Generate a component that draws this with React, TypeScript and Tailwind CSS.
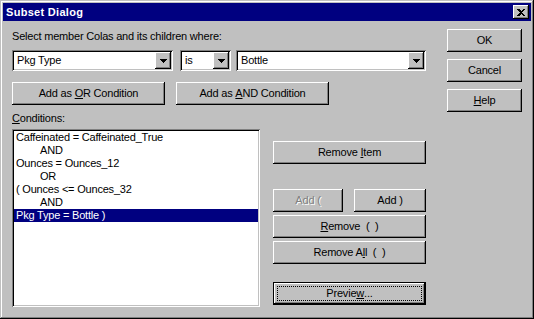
import React, { FC, ReactNode } from "react"

// Win95 bevels, drawn as stacked inset shadows
const raised =
  "shadow-[inset_-1px_-1px_0_#000,inset_1px_1px_0_#fff,inset_-2px_-2px_0_#808080,inset_2px_2px_0_#c0c0c0]"
const sunken =
  "shadow-[inset_1px_1px_0_#808080,inset_-1px_-1px_0_#fff,inset_2px_2px_0_#000,inset_-2px_-2px_0_#c0c0c0]"

type ButtonProps = { children: ReactNode; className?: string; disabled?: boolean }

const Button: FC<ButtonProps> = ({ children, className = "", disabled }) => (
  <div
    className={`flex h-[23px] items-center justify-center bg-[#c0c0c0] ${raised} ${
      disabled ? "text-[#808080] [text-shadow:1px_1px_0_#fff]" : "text-black"
    } ${className}`}
  >
    {children}
  </div>
)

const Arrow = () => (
  <svg width="7" height="4" viewBox="0 0 7 4" shapeRendering="crispEdges">
    <rect x="0" y="0" width="7" height="1" fill="#000" />
    <rect x="1" y="1" width="5" height="1" fill="#000" />
    <rect x="2" y="2" width="3" height="1" fill="#000" />
    <rect x="3" y="3" width="1" height="1" fill="#000" />
  </svg>
)

const Combo: FC<{ value: string; className?: string }> = ({ value, className = "" }) => (
  <div className={`flex h-[21px] bg-white p-[2px] ${sunken} ${className}`}>
    <div className="flex-1 pl-[3px] leading-[17px]">{value}</div>
    <div className={`flex h-[17px] w-[16px] items-center justify-center bg-[#c0c0c0] ${raised}`}>
      <Arrow />
    </div>
  </div>
)

const conditions = [
  { text: "Caffeinated = Caffeinated_True" },
  { text: "AND", indent: true },
  { text: "Ounces = Ounces_12" },
  { text: "OR", indent: true },
  { text: "( Ounces <= Ounces_32" },
  { text: "AND", indent: true },
  { text: "Pkg Type = Bottle )", selected: true },
]

export default function App() {
  return (
    <div
      className="h-[319px] w-[534px] bg-[#c0c0c0] p-[3px] font-['Liberation_Sans',Arial,sans-serif] text-[11px] tracking-[-0.2px] text-black shadow-[inset_-1px_-1px_0_#000,inset_1px_1px_0_#c0c0c0,inset_-2px_-2px_0_#808080,inset_2px_2px_0_#fff]"
    >
      {/* title bar */}
      <div className="flex h-[18px] items-center bg-[#000080] pl-[3px] pr-[2px]">
        <span className="flex-1 font-bold tracking-[0.3px] text-white">Subset Dialog</span>
        <div className={`flex h-[14px] w-[16px] items-center justify-center bg-[#c0c0c0] ${raised}`}>
          <svg width="8" height="7" viewBox="0 0 8 7" shapeRendering="crispEdges">
            <path d="M0 0h2l2 2 2-2h2L5 3.5 8 7H6L4 5 2 7H0l3-3.5z" fill="#000" />
          </svg>
        </div>
      </div>

      <div className="flex px-[9px]">
        {/* left side */}
        <div className="flex w-[414px] flex-col">
          <div className="mt-[9px] leading-[13px]">Select member Colas and its children where:</div>

          <div className="mt-[7px] flex">
            <Combo value="Pkg Type" className="w-[161px]" />
            <Combo value="is" className="ml-[7px] w-[51px]" />
            <Combo value="Bottle" className="ml-[5px] w-[190px]" />
          </div>

          <div className="mt-[11px] flex gap-[11px]">
            <Button className="w-[153px]">
              Add as&nbsp;<u>O</u>R Condition
            </Button>
            <Button className="w-[153px]">
              Add as&nbsp;<u>A</u>ND Condition
            </Button>
          </div>

          <div className="mt-[7px] leading-[13px]">
            <u>C</u>onditions:
          </div>

          <div className="mt-[4px] flex">
            <div className={`h-[178px] w-[248px] bg-white p-[2px] ${sunken}`}>
              {conditions.map((c, i) => (
                <div
                  key={i}
                  className={`h-[13px] whitespace-pre leading-[13px] ${c.indent ? "pl-[26px]" : "pl-[2px]"} ${
                    c.selected ? "bg-[#000080] text-white" : ""
                  }`}
                >
                  {c.text}
                </div>
              ))}
            </div>

            <div className="ml-[13px] flex w-[153px] flex-col">
              <Button className="mt-[12px]">
                Remove&nbsp;<u>I</u>tem
              </Button>
              <div className="mt-[25px] flex justify-between">
                <Button className="w-[70px]" disabled>
                  Add (
                </Button>
                <Button className="w-[72px]">Add )</Button>
              </div>
              <Button className="mt-[3px] whitespace-pre">
                <u>R</u>emove&nbsp;&nbsp;(&nbsp;&nbsp;)
              </Button>
              <Button className="mt-[3px] whitespace-pre">
                Remove A<u>l</u>l&nbsp;&nbsp;(&nbsp;&nbsp;)
              </Button>
              <div className="mt-[18px] h-[23px] border border-black">
                <div className={`h-full bg-[#c0c0c0] p-[3px] ${raised}`}>
                  <div className="flex h-full items-center justify-center border border-dotted border-black">
                    Previe<u>w</u>...
                  </div>
                </div>
              </div>
            </div>
          </div>
        </div>

        {/* right side */}
        <div className="ml-[21px] flex w-[75px] flex-col">
          <Button className="mt-[8px]">OK</Button>
          <Button className="mt-[7px]">Cancel</Button>
          <Button className="mt-[7px]">
            <u>H</u>elp
          </Button>
        </div>
      </div>
    </div>
  )
}
